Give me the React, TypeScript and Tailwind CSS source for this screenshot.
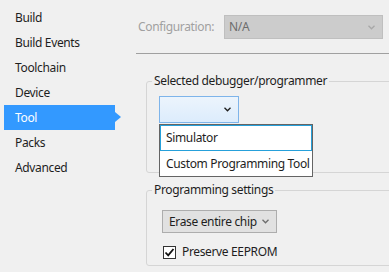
import React from 'react';

const navItems = ['Build', 'Build Events', 'Toolchain', 'Device', 'Tool', 'Packs', 'Advanced'];

const Chevron: React.FC<{ color?: string }> = ({ color = '#1e1e1e' }) => (
  <svg width="7" height="5" viewBox="0 0 7 5" className="shrink-0">
    <path d="M0.5 0.8 L3.5 3.8 L6.5 0.8" fill="none" stroke={color} strokeWidth="1.3" />
  </svg>
);

const App: React.FC = () => {
  return (
    <div
      className="w-[389px] h-[272px] bg-[#f0f0f0] flex overflow-hidden text-[12px] tracking-[-0.35px] whitespace-nowrap text-[#1e1e1e]"
      style={{ fontFamily: '"Noto Sans", "Open Sans", sans-serif' }}
    >
      {/* sidebar */}
      <div className="w-[130px] shrink-0 pt-[5px] flex flex-col">
        {navItems.map(item => {
          const active = item === 'Tool';
          return (
            <div
              key={item}
              className={`relative ml-[4px] w-[111px] h-[25px] flex items-center pl-[11px] ${active ? 'bg-[#3399ff] text-white' : ''}`}
            >
              {item}
              {active && (
                <span className="absolute right-[-6px] top-[7px] w-0 h-0 border-y-[5px] border-y-transparent border-l-[6px] border-l-[#3399ff]" />
              )}
            </div>
          );
        })}
      </div>

      {/* main */}
      <div className="flex-1 min-w-0 flex flex-col">
        <div className="flex items-center pt-[15px] pl-[8px]">
          <span className="text-[#a0a0a0] w-[86px]">Configuration:</span>
          <div className="w-[159px] h-[24px] bg-[#cccccc] border border-[#bfbfbf] flex items-center justify-between pl-[4px] pr-[7px] text-[#6d6d6d]">
            <span>N/A</span>
            <Chevron color="#a8a8a8" />
          </div>
        </div>

        <div className="h-px bg-[#a0a0a0] ml-[6px] mt-[14px]" />

        <fieldset className="ml-[16px] w-[260px] mt-[19px] border border-[#d5d5d5] rounded-[3px] pl-[5px] h-[100px]">
          <legend className="px-[2px] leading-[16px]">Selected debugger/programmer</legend>
          <div className="relative ml-[7px] mt-[7px] w-[80px]">
            <div className="h-[27px] border border-[#7eb4ea] bg-gradient-to-b from-[#ecf4fc] to-[#dcecfc] flex items-center justify-end pr-[7px]">
              <Chevron />
            </div>
            <div className="absolute left-0 top-[28px] w-[154px] h-[53px] bg-white border border-[#646464] z-10 flex flex-col">
              <div className="h-[26px] border border-[#26a0da] flex items-center pl-[5px]">Simulator</div>
              <div className="h-[25px] flex items-center pl-[6px]">Custom Programming Tool</div>
            </div>
          </div>
        </fieldset>

        <fieldset className="ml-[16px] w-[260px] mt-[9px] border border-[#d5d5d5] rounded-[3px] pl-[5px] h-[84px]">
          <legend className="px-[2px] leading-[16px]">Programming settings</legend>
          <div className="ml-[10px] mt-[12px] w-[115px] h-[23px] bg-[#e1e1e1] border border-[#adadad] flex items-center justify-between pl-[6px] pr-[7px]">
            <span>Erase entire chip</span>
            <Chevron color="#6d6d6d" />
          </div>
          <div className="flex items-center ml-[11px] mt-[10px]">
            <div className="w-[13px] h-[13px] bg-white border border-[#333333] flex items-center justify-center">
              <svg width="11" height="11" viewBox="0 0 11 11">
                <path d="M1.5 5.5 L4.2 8.3 L9.5 2" fill="none" stroke="#111" strokeWidth="1.8" />
              </svg>
            </div>
            <span className="ml-[6px]">Preserve EEPROM</span>
          </div>
        </fieldset>
      </div>
    </div>
  );
};

export default App;
